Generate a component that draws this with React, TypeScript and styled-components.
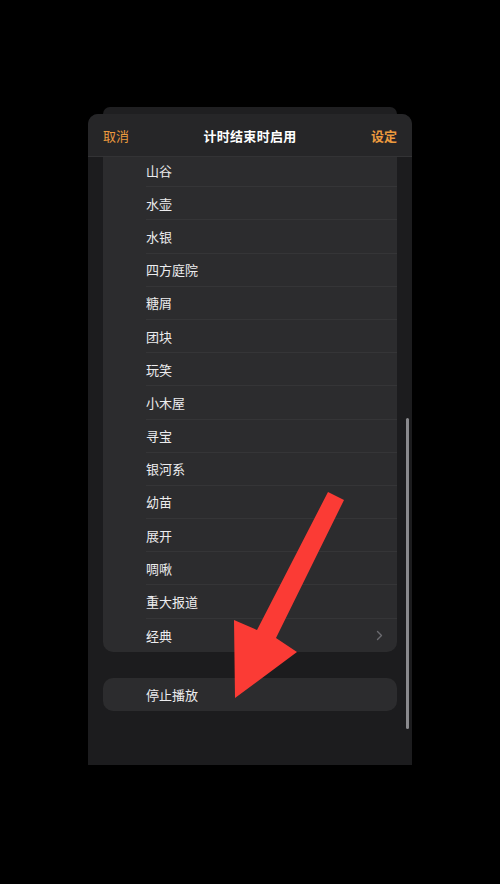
import React from "react"
import styled, { createGlobalStyle } from "styled-components"

const GlobalStyle = createGlobalStyle`
  html, body {
    margin: 0;
    padding: 0;
    background: #000;
  }
  body {
    font-family: "Noto Sans CJK SC", "Noto Sans", "Liberation Sans", sans-serif;
    -webkit-font-smoothing: antialiased;
  }
`

const Page = styled.div`
  position: relative;
  width: 500px;
  height: 884px;
  background: #000;
  display: flex;
  flex-direction: column;
  align-items: center;
  padding-top: 107px;
  box-sizing: border-box;
  overflow: hidden;
`

const BackCard = styled.div`
  width: 294px;
  height: 7px;
  background: #1f1f21;
  border-radius: 10px 10px 0 0;
`

const Sheet = styled.div`
  position: relative;
  width: 324px;
  height: 651px;
  background: #1c1c1e;
  border-radius: 10px 10px 0 0;
  display: flex;
  flex-direction: column;
  overflow: hidden;
`

const Header = styled.div`
  flex: 0 0 auto;
  height: 43px;
  display: flex;
  align-items: center;
  justify-content: space-between;
  padding: 0 15px;
  background: #262628;
  border-bottom: 1px solid #333335;
  box-sizing: border-box;
`

const HeaderButton = styled.span<{ $bold?: boolean }>`
  color: #ec9a3e;
  font-size: 13px;
  font-weight: ${(p) => (p.$bold ? 700 : 400)};
  width: 40px;
  text-align: ${(p) => (p.$bold ? "right" : "left")};
`

const Title = styled.span`
  color: #fff;
  font-size: 13px;
  font-weight: 700;
  letter-spacing: 0.3px;
`

const Content = styled.div`
  flex: 1;
  overflow: hidden;
  padding: 0 15px;
`

const Group = styled.div<{ $offset?: number; $scrolled?: boolean }>`
  background: #2c2c2e;
  border-radius: ${(p) => (p.$scrolled ? "0 0 10px 10px" : "10px")};
  margin-top: ${(p) => p.$offset ?? 0}px;
  overflow: hidden;
`

const Row = styled.div`
  height: 33.2px;
  padding-left: 43px;
  display: flex;
`

const RowInner = styled.div<{ $last?: boolean }>`
  flex: 1;
  display: flex;
  align-items: center;
  justify-content: space-between;
  padding-right: 14px;
  color: #ececee;
  font-size: 13px;
  border-bottom: ${(p) => (p.$last ? "none" : "1px solid #353537")};
`

const Chevron = styled.svg`
  width: 7px;
  height: 11px;
`

const Scrollbar = styled.div`
  position: absolute;
  right: 3px;
  top: 304px;
  width: 3px;
  height: 311px;
  border-radius: 2px;
  background: #8a8a8e;
`

const Arrow = styled.svg`
  position: absolute;
  left: 0;
  top: 0;
  width: 500px;
  height: 884px;
  pointer-events: none;
`

const sounds = [
  "山谷",
  "水壶",
  "水银",
  "四方庭院",
  "糖屑",
  "团块",
  "玩笑",
  "小木屋",
  "寻宝",
  "银河系",
  "幼苗",
  "展开",
  "啁啾",
  "重大报道",
  "经典",
]

export default function App() {
  return (
    <>
      <GlobalStyle />
      <Page>
        <BackCard />
        <Sheet>
          <Header>
            <HeaderButton>取消</HeaderButton>
            <Title>计时结束时启用</Title>
            <HeaderButton $bold>设定</HeaderButton>
          </Header>
          <Content>
            <Group $offset={-3} $scrolled>
              {sounds.map((name, i) => {
                const last = i === sounds.length - 1
                return (
                  <Row key={name}>
                    <RowInner $last={last}>
                      <span>{name}</span>
                      {last && (
                        <Chevron viewBox="0 0 7 11" fill="none">
                          <path d="M1.5 1.5L5.5 5.5L1.5 9.5" stroke="#6b6b70" strokeWidth="1.4" strokeLinecap="round" strokeLinejoin="round" />
                        </Chevron>
                      )}
                    </RowInner>
                  </Row>
                )
              })}
            </Group>
            <Group $offset={26}>
              <Row style={{ height: 33 }}>
                <RowInner $last>
                  <span>停止播放</span>
                </RowInner>
              </Row>
            </Group>
          </Content>
          <Scrollbar />
        </Sheet>
        <Arrow viewBox="0 0 500 884">
          <polygon
            points="328,492 344,500 276,638 297,652 235,698 234,620 257,630"
            fill="#fb3b35"
          />
        </Arrow>
      </Page>
    </>
  )
}
